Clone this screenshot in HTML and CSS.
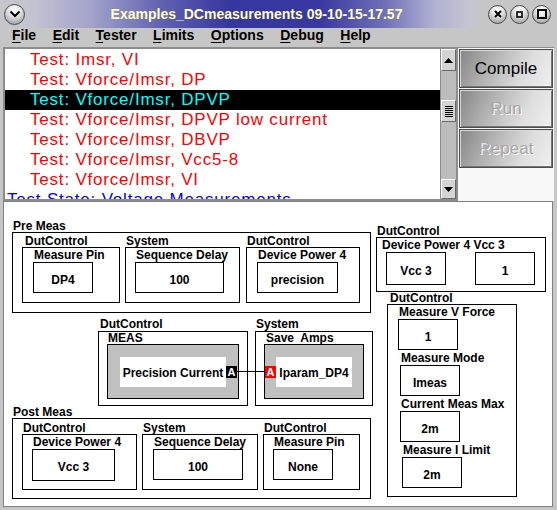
FILE: index.html
```html
<!DOCTYPE html>
<html lang="en">
<head>
  <meta charset="UTF-8" />
  <meta name="viewport" content="width=device-width, initial-scale=1.0"/>
  <title>Examples_DCmeasurements 09-10-15-17.57</title>
  <link rel="stylesheet" href="styles.css">
</head>
<body>
  <div class="titlebar">
    <span class="knob menu-knob">
      <svg width="12" height="8" viewBox="0 0 12 8"><polyline points="1.5,1.5 6,6 10.5,1.5" fill="none" stroke="#000" stroke-width="2"/></svg>
    </span>
    <div class="title">Examples_DCmeasurements 09-10-15-17.57</div>
    <div class="knobs">
      <span class="knob"><svg width="8" height="8" viewBox="0 0 8 8"><path d="M1 1L7 7M7 1L1 7" stroke="#000" stroke-width="2"/></svg></span>
      <span class="knob"><svg width="7" height="7" viewBox="0 0 7 7"><rect x="1" y="1" width="5" height="5" fill="none" stroke="#000" stroke-width="1.6"/></svg></span>
      <span class="knob"><svg width="10" height="10" viewBox="0 0 10 10"><rect x="1" y="1" width="8" height="8" fill="none" stroke="#000" stroke-width="2"/></svg></span>
    </div>
  </div>

  <div class="menubar">
    <span><u>F</u>ile</span>
    <span><u>E</u>dit</span>
    <span><u>T</u>ester</span>
    <span><u>L</u>imits</span>
    <span><u>O</u>ptions</span>
    <span><u>D</u>ebug</span>
    <span><u>H</u>elp</span>
  </div>

  <div class="top-pane">
    <div class="listbox">
      <div class="rows">
        <div class="row">Test: Imsr, VI</div>
        <div class="row">Test: Vforce/Imsr, DP</div>
        <div class="row selected">Test: Vforce/Imsr, DPVP</div>
        <div class="row">Test: Vforce/Imsr, DPVP low current</div>
        <div class="row">Test: Vforce/Imsr, DBVP</div>
        <div class="row">Test: Vforce/Imsr, Vcc5-8</div>
        <div class="row">Test: Vforce/Imsr, VI</div>
        <div class="row state">Test State: Voltage Measurements</div>
      </div>
      <div class="scrollbar">
        <div class="arrow up"><svg width="9" height="5" viewBox="0 0 9 5"><polygon points="0,5 4.5,0 9,5" fill="#000"/></svg></div>
        <div class="track">
          <div class="thumb"><svg width="8" height="12" viewBox="0 0 8 12"><path d="M0 1.5H8M0 3.5H8M0 5.5H8M0 7.5H8M0 9.5H8M0 11.5H8" stroke="#000" stroke-width="1"/></svg></div>
        </div>
        <div class="arrow down"><svg width="9" height="5" viewBox="0 0 9 5"><polygon points="0,0 4.5,5 9,0" fill="#000"/></svg></div>
      </div>
    </div>
    <div class="actions">
      <button class="action">Compile</button>
      <button class="action" disabled>Run</button>
      <button class="action" disabled>Repeat</button>
    </div>
  </div>

  <div class="canvas">
    <div class="node pre">
      <div class="tag">Pre Meas</div>
      <div class="frame group">
        <div class="blk">
          <div class="tag">DutControl</div>
          <div class="frame cell">
            <div class="name">Measure Pin</div>
            <div class="val">DP4</div>
          </div>
        </div>
        <div class="blk">
          <div class="tag">System</div>
          <div class="frame cell">
            <div class="name">Sequence Delay</div>
            <div class="val">100</div>
          </div>
        </div>
        <div class="blk">
          <div class="tag">DutControl</div>
          <div class="frame cell">
            <div class="name">Device Power 4</div>
            <div class="val">precision</div>
          </div>
        </div>
      </div>
    </div>

    <div class="node vcc">
      <div class="tag">DutControl</div>
      <div class="frame">
        <div class="name">Device Power 4 Vcc 3</div>
        <div class="pair">
          <div class="val">Vcc 3</div>
          <div class="val">1</div>
        </div>
      </div>
    </div>

    <div class="node vmeas">
      <div class="tag">DutControl</div>
      <div class="frame">
        <div class="item">
          <div class="name">Measure V Force</div>
          <div class="val">1</div>
        </div>
        <div class="item">
          <div class="name">Measure Mode</div>
          <div class="val">Imeas</div>
        </div>
        <div class="item">
          <div class="name">Current Meas Max</div>
          <div class="val">2m</div>
        </div>
        <div class="item">
          <div class="name">Measure I Limit</div>
          <div class="val">2m</div>
        </div>
      </div>
    </div>

    <div class="node meas">
      <div class="tag">DutControl</div>
      <div class="frame">
        <div class="name">MEAS</div>
        <div class="grey">
          <div class="white">Precision Current</div>
          <div class="port">A</div>
        </div>
      </div>
    </div>

    <div class="node amps">
      <div class="tag">System</div>
      <div class="frame">
        <div class="name">Save  Amps</div>
        <div class="grey">
          <div class="port in">A</div>
          <div class="white">Iparam_DP4</div>
        </div>
      </div>
    </div>

    <div class="wire"></div>

    <div class="node post">
      <div class="tag">Post Meas</div>
      <div class="frame group">
        <div class="blk">
          <div class="tag">DutControl</div>
          <div class="frame cell">
            <div class="name">Device Power 4</div>
            <div class="val">Vcc 3</div>
          </div>
        </div>
        <div class="blk">
          <div class="tag">System</div>
          <div class="frame cell">
            <div class="name">Sequence Delay</div>
            <div class="val">100</div>
          </div>
        </div>
        <div class="blk">
          <div class="tag">DutControl</div>
          <div class="frame cell">
            <div class="name">Measure Pin</div>
            <div class="val">None</div>
          </div>
        </div>
      </div>
    </div>
  </div>
</body>
</html>
```

FILE: styles.css
```css
html, body {
  margin: 0;
  padding: 0;
}

body {
  width: 557px;
  height: 510px;
  overflow: hidden;
  background: #c6c6c6;
  font-family: "Liberation Sans", Arial, sans-serif;
}

/* title bar */
.titlebar {
  display: flex;
  align-items: center;
  height: 28px;
  background: linear-gradient(to right,
    #c6c6c8 0px, #c4c4d0 30px, #a4a4cc 90px, #6262b2 160px,
    #3636a0 230px, #3838a0 320px, #7070b8 385px, #b2b2d4 435px,
    #c6c6d2 472px, #c6c6c6 482px);
}

.knob {
  box-sizing: border-box;
  width: 19px;
  height: 19px;
  border-radius: 50%;
  border: 1px solid #4a4a4a;
  background: radial-gradient(circle at 50% 28%, #ffffff 0, #ececec 30%, #b4b4b4 72%, #8c8c8c 100%);
  display: flex;
  align-items: center;
  justify-content: center;
}

.menu-knob {
  width: 21px;
  height: 21px;
  margin-left: 4px;
}

.title {
  flex: 1;
  text-align: center;
  font-weight: bold;
  font-size: 14px;
  line-height: 28px;
  color: #ffffc4;
  white-space: nowrap;
}

.knobs {
  display: flex;
  gap: 3px;
  margin-right: 6px;
}

/* menu */
.menubar {
  display: flex;
  gap: 16.5px;
  height: 19px;
  padding-left: 12px;
  font-weight: bold;
  font-size: 14px;
  line-height: 15px;
  color: #000;
}

.menubar u {
  text-underline-offset: 2px;
}

/* test list + buttons */
.top-pane {
  display: flex;
  height: 154px;
  margin: 0 3px;
}

.listbox {
  display: flex;
  width: 455px;
  box-sizing: border-box;
  border: 2px solid #8c8c8c;
  background: #fff;
}

.rows {
  flex: 1;
  overflow: hidden;
  padding-top: 1px;
  font-size: 17px;
  line-height: 20px;
  letter-spacing: 0.8px;
  white-space: nowrap;
}

.row {
  padding-left: 25px;
  color: #ff0000;
}

.row.selected {
  background: #000;
  color: #00ffff;
}

.row.state {
  padding-left: 2px;
  color: #0000ff;
}

.scrollbar {
  width: 16px;
  box-sizing: border-box;
  display: flex;
  flex-direction: column;
  background: #bcbcbc;
  border-left: 1px solid #8c8c8c;
}

.arrow, .thumb {
  box-sizing: border-box;
  background: #d4d4d4;
  border: 1px solid;
  border-color: #fff #6a6a6a #6a6a6a #fff;
  display: flex;
  align-items: center;
  justify-content: center;
}

.arrow.up {
  height: 22px;
}

.arrow.down {
  height: 20px;
}

.track {
  flex: 1;
}

.thumb {
  margin-top: 29px;
  height: 22px;
}

.actions {
  flex: 1;
  display: flex;
  flex-direction: column;
  gap: 1px;
  padding: 1px 1px 0;
  background: #f8f8f8;
  border-top: 1px solid #8c8c8c;
}

.action {
  height: 39px;
  box-sizing: border-box;
  padding: 0;
  border: 1px solid #4c4c4c;
  box-shadow: inset 1px 1px 0 #d8d8d8, inset -1px -1px 0 #787878;
  background: linear-gradient(115deg, #868686 0%, #b4b4b4 35%, #dedede 70%, #f0f0f0 100%);
  font-family: "Liberation Sans", Arial, sans-serif;
  font-size: 17px;
  color: #000;
}

.action:disabled {
  color: #a6a6a6;
  text-shadow: 1px 1px 0 #fff;
}

/* flow canvas */
.canvas {
  position: relative;
  margin-left: 3px;
  width: 550px;
  height: 306px;
  box-sizing: border-box;
  border: 1px solid #808080;
  background: #fff;
  font-size: 12px;
  font-weight: bold;
  color: #000;
}

.node {
  position: absolute;
}

.tag {
  line-height: 12px;
  padding-left: 1px;
  white-space: pre;
}

.frame {
  box-sizing: border-box;
  border: 1px solid #000;
}

.name {
  line-height: 13px;
  padding-left: 1px;
  white-space: pre;
}

.val {
  box-sizing: border-box;
  width: 60px;
  height: 31px;
  padding-top: 4px;
  border: 1px solid #000;
  display: flex;
  align-items: center;
  justify-content: center;
}

.group {
  width: 359px;
  height: 81px;
  display: flex;
  align-items: flex-start;
  padding-left: 9px;
}

.cell {
  height: 56px;
  padding-top: 1px;
}

.pre {
  left: 8px;
  top: 18px;
}

.pre .group {
  padding-top: 2px;
}

.pre .blk:nth-child(1) { width: 98px; }
.pre .blk:nth-child(1) .tag { padding-left: 3px; }
.pre .blk:nth-child(1) .cell { padding-left: 10px; }
.pre .blk:nth-child(2) { width: 115px; margin-left: 5px; }
.pre .blk:nth-child(2) .cell { padding-left: 9px; }
.pre .blk:nth-child(2) .val { width: 89px; }
.pre .blk:nth-child(3) { width: 114px; margin-left: 6px; }
.pre .blk:nth-child(3) .cell { padding-left: 10px; }
.pre .blk:nth-child(3) .val { width: 81px; }

.post {
  left: 8px;
  top: 204px;
}

.post .group {
  padding-top: 3px;
}

.post .blk:nth-child(1) { width: 115px; }
.post .blk:nth-child(1) .cell { padding-left: 9px; }
.post .blk:nth-child(1) .val { width: 83px; height: 32px; }
.post .blk:nth-child(2) { width: 116px; margin-left: 5px; }
.post .blk:nth-child(2) .cell { padding-left: 10px; }
.post .blk:nth-child(2) .val { width: 90px; }
.post .blk:nth-child(3) { width: 97px; margin-left: 5px; }
.post .blk:nth-child(3) .cell { padding-left: 9px; }

.vcc {
  left: 372px;
  top: 23px;
}

.vcc .frame {
  width: 170px;
  height: 55px;
  padding: 1px 0 0 9px;
}

.vcc .name {
  margin-left: -5px;
}

.pair {
  display: flex;
  gap: 29px;
}

.pair .val {
  height: 33px;
}

.vmeas {
  left: 383px;
  top: 90px;
}

.vmeas .tag {
  padding-left: 3px;
}

.vmeas .frame {
  width: 130px;
  height: 193px;
  padding-top: 1px;
}

.item + .item {
  margin-top: 2px;
}

.item:nth-child(1) { margin-left: 10px; }
.item:nth-child(2) { margin-left: 12px; }
.item:nth-child(3) { margin-left: 12px; }
.item:nth-child(4) { margin-left: 14px; }

.meas, .amps {
  top: 116px;
}

.meas .tag, .amps .tag {
  margin-bottom: 1px;
}

.meas {
  left: 94px;
}

.meas .tag {
  padding-left: 2px;
}

.meas .frame, .amps .frame {
  height: 75px;
  padding: 0 8px;
}

.meas .frame {
  width: 150px;
}

.meas .name, .amps .name {
  line-height: 11px;
  padding-top: 1px;
}

.amps {
  left: 251px;
}

.amps .frame {
  width: 118px;
}

.amps .name {
  padding-left: 2px;
}

.grey {
  box-sizing: border-box;
  height: 55px;
  border: 1px solid #000;
  background: #c0c0c0;
  display: flex;
  align-items: center;
}

.meas .grey {
  padding: 0 1px 0 12px;
}

.amps .grey {
  padding: 0 11px 0 0;
}

.white {
  height: 30px;
  padding-top: 3px;
  box-sizing: border-box;
  background: #fff;
  display: flex;
  align-items: center;
  justify-content: center;
  white-space: nowrap;
}

.meas .white {
  width: 106px;
}

.amps .white {
  width: 76px;
}

.port {
  width: 11px;
  height: 12px;
  background: #000;
  color: #fff;
  font-size: 11px;
  line-height: 12px;
  text-align: center;
}

.port.in {
  background: #ff0000;
}

.wire {
  position: absolute;
  left: 233px;
  top: 169px;
  width: 28px;
  height: 1px;
  background: #000;
}
```
